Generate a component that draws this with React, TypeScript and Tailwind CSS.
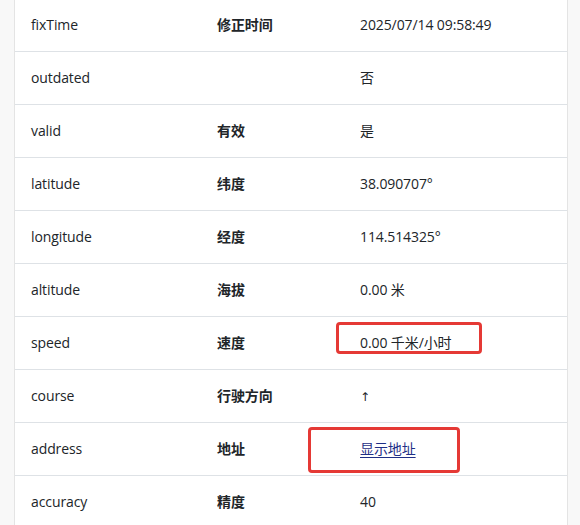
import type { ReactNode } from "react";

type Row = {
  key: string;
  label: string;
  value: ReactNode;
  mark?: "speed" | "address";
};

const rows: Row[] = [
  { key: "fixTime", label: "修正时间", value: "2025/07/14 09:58:49" },
  { key: "outdated", label: "", value: "否" },
  { key: "valid", label: "有效", value: "是" },
  { key: "latitude", label: "纬度", value: "38.090707°" },
  { key: "longitude", label: "经度", value: "114.514325°" },
  { key: "altitude", label: "海拔", value: "0.00 米" },
  { key: "speed", label: "速度", value: "0.00 千米/小时", mark: "speed" },
  {
    key: "course",
    label: "行驶方向",
    value: <span className="font-['DejaVu_Sans',sans-serif] text-[12px]">↑</span>,
  },
  {
    key: "address",
    label: "地址",
    value: (
      <a href="#" className="text-[#1f2f86] underline underline-offset-[3px]">
        显示地址
      </a>
    ),
    mark: "address",
  },
  { key: "accuracy", label: "精度", value: "40" },
];

export default function App() {
  return (
    <div
      className="flex h-[525px] w-[580px] overflow-hidden bg-[#f8f8f8] text-[14px] tracking-[-0.1px] text-[#212529]"
      style={{ fontFamily: '"Open Sans", "Noto Sans CJK SC", sans-serif' }}
    >
      <div className="w-[15px] shrink-0 border-r border-[#e4e4e4]" />
      <div className="w-[552px] shrink-0 bg-white">
        <div className="-mt-px">
          {rows.map((r) => (
            <AttrRow key={r.key} row={r} />
          ))}
        </div>
      </div>
      <div className="flex-1 border-l border-[#e4e4e4]" />
    </div>
  );
}

function AttrRow({ row }: { row: Row }) {
  return (
    <div className="relative grid h-[53px] grid-cols-[186px_143px_1fr] items-center border-b border-[#dee2e6] pb-[2px]">
      <div className="pl-4">{row.key}</div>
      <div className="pl-4 font-bold">{row.label}</div>
      <div className="pl-4">{row.value}</div>
      {row.mark === "speed" && (
        <div className="absolute left-[321px] top-[5px] h-[32px] w-[146px] rounded-[4px] border-[3px] border-[#e53935]" />
      )}
      {row.mark === "address" && (
        <div className="absolute left-[293px] top-[4px] h-[46px] w-[152px] rounded-[4px] border-[3px] border-[#e53935]" />
      )}
    </div>
  );
}
